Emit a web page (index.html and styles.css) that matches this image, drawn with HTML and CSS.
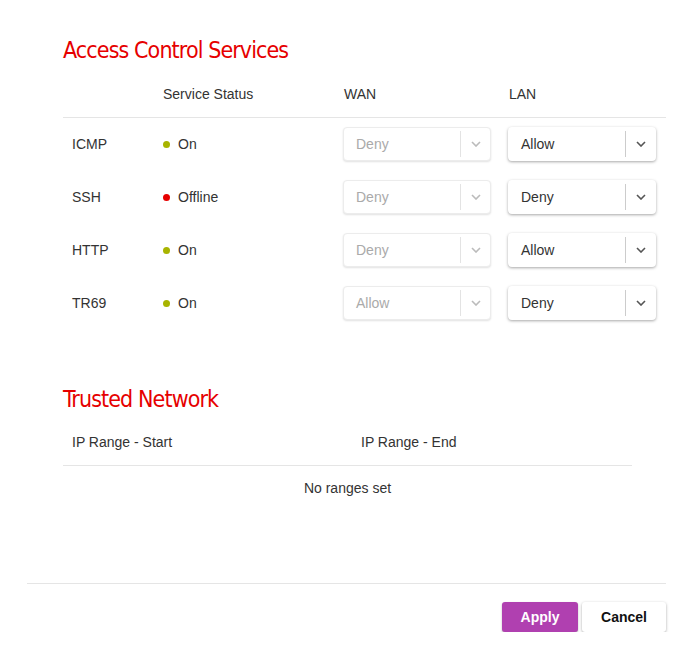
FILE: index.html
```html
<!DOCTYPE html>
<html>
<head>
<meta charset="utf-8">
<link rel="stylesheet" href="styles.css">
</head>
<body>
<div class="page">
  <div class="content">
    <h2 class="title">Access Control Services</h2>
    <div class="acs">
      <div class="acs-row acs-head">
        <div></div>
        <div class="c2">Service Status</div>
        <div class="c3">WAN</div>
        <div class="c4">LAN</div>
      </div>
      <div class="acs-row">
        <div class="c1">ICMP</div>
        <div class="c2"><span class="dot on"></span>On</div>
        <div class="c3"><div class="sel dis"><span class="val">Deny</span><span class="arr"><svg width="10" height="6" viewBox="0 0 10 6"><path d="M1 1l4 4 4-4" fill="none" stroke="currentColor" stroke-width="1.6"/></svg></span></div></div>
        <div class="c4"><div class="sel"><span class="val">Allow</span><span class="arr"><svg width="10" height="6" viewBox="0 0 10 6"><path d="M1 1l4 4 4-4" fill="none" stroke="currentColor" stroke-width="1.6"/></svg></span></div></div>
      </div>
      <div class="acs-row">
        <div class="c1">SSH</div>
        <div class="c2"><span class="dot off"></span>Offline</div>
        <div class="c3"><div class="sel dis"><span class="val">Deny</span><span class="arr"><svg width="10" height="6" viewBox="0 0 10 6"><path d="M1 1l4 4 4-4" fill="none" stroke="currentColor" stroke-width="1.6"/></svg></span></div></div>
        <div class="c4"><div class="sel"><span class="val">Deny</span><span class="arr"><svg width="10" height="6" viewBox="0 0 10 6"><path d="M1 1l4 4 4-4" fill="none" stroke="currentColor" stroke-width="1.6"/></svg></span></div></div>
      </div>
      <div class="acs-row">
        <div class="c1">HTTP</div>
        <div class="c2"><span class="dot on"></span>On</div>
        <div class="c3"><div class="sel dis"><span class="val">Deny</span><span class="arr"><svg width="10" height="6" viewBox="0 0 10 6"><path d="M1 1l4 4 4-4" fill="none" stroke="currentColor" stroke-width="1.6"/></svg></span></div></div>
        <div class="c4"><div class="sel"><span class="val">Allow</span><span class="arr"><svg width="10" height="6" viewBox="0 0 10 6"><path d="M1 1l4 4 4-4" fill="none" stroke="currentColor" stroke-width="1.6"/></svg></span></div></div>
      </div>
      <div class="acs-row">
        <div class="c1">TR69</div>
        <div class="c2"><span class="dot on"></span>On</div>
        <div class="c3"><div class="sel dis"><span class="val">Allow</span><span class="arr"><svg width="10" height="6" viewBox="0 0 10 6"><path d="M1 1l4 4 4-4" fill="none" stroke="currentColor" stroke-width="1.6"/></svg></span></div></div>
        <div class="c4"><div class="sel"><span class="val">Deny</span><span class="arr"><svg width="10" height="6" viewBox="0 0 10 6"><path d="M1 1l4 4 4-4" fill="none" stroke="currentColor" stroke-width="1.6"/></svg></span></div></div>
      </div>
    </div>

    <h2 class="title title2">Trusted Network</h2>
    <div class="tn">
      <div class="tn-head">
        <div class="t1">IP Range - Start</div>
        <div class="t2">IP Range - End</div>
      </div>
      <div class="tn-empty">No ranges set</div>
    </div>
  </div>
  <div class="footer">
    <button class="btn apply">Apply</button>
    <button class="btn cancel">Cancel</button>
  </div>
</div>
</body>
</html>
```
FILE: styles.css
```css
* { box-sizing: border-box; }
body {
  margin: 0;
  background: #fff;
  font-family: "Liberation Sans", Arial, sans-serif;
  font-size: 14px;
  color: #333;
}
.page {
  padding: 0 20px 0 27px;
}
.content {
  padding-left: 36px;
  padding-top: 36px;
}
.title {
  margin: 0;
  font-family: "DejaVu Sans Condensed", "Liberation Sans", sans-serif;
  font-weight: normal;
  font-size: 23px;
  line-height: 28px;
  color: #e60000;
  letter-spacing: -0.9px;
}
.acs {
  margin-top: 22px;
  width: 603px;
}
.acs-row {
  display: grid;
  grid-template-columns: 100px 180px 165px 158px;
  align-items: center;
  height: 53px;
  padding-bottom: 1px;
}
.acs-head {
  height: 32px;
  padding-bottom: 0;
  align-items: start;
  border-bottom: 1px solid #e5e5e5;
}
.acs-head .c3 { padding-left: 1px; }
.acs-head .c4 { padding-left: 1px; }
.c1 { padding-left: 9px; }
.c2 { display: flex; align-items: center; }
.dot {
  width: 7px; height: 7px; border-radius: 50%;
  margin: 1px 8px 0 0;
}
.dot.on { background: #a8b400; }
.dot.off { background: #e60000; }
.sel {
  width: 148px;
  height: 34px;
  border-radius: 4px;
  background: #fff;
  display: flex;
  align-items: center;
  box-shadow: 0 1px 3px rgba(0,0,0,0.35);
  color: #333;
}
.sel .val {
  flex: 1;
  padding-left: 13px;
}
.sel .arr {
  width: 31px;
  height: 26px;
  border-left: 1px solid #ccc;
  display: flex;
  align-items: center;
  justify-content: center;
  color: #555;
}
.sel.dis {
  box-shadow: 0 1px 2px rgba(0,0,0,0.12);
  border: 1px solid #ececec;
  color: #aaa;
}
.sel.dis .val { padding-left: 12px; }
.sel.dis .arr { color: #bbb; border-left-color: #e3e3e3; width: 30px; }
.title2 {
  margin-top: 55px;
}
.tn {
  width: 569px;
  margin-top: 21px;
}
.tn-head {
  display: flex;
  height: 32px;
  border-bottom: 1px solid #e5e5e5;
}
.t1 { width: 298px; padding-left: 9px; }
.tn-empty {
  text-align: center;
  padding-top: 14px;
}
.footer {
  margin-top: 87px;
  border-top: 1px solid #e5e5e5;
  display: flex;
  justify-content: flex-end;
  gap: 4px;
  padding-top: 18px;
}
.btn {
  height: 30px;
  border-radius: 3px;
  font-family: "Liberation Sans", Arial, sans-serif;
  font-weight: bold;
  font-size: 14px;
  border: none;
  cursor: pointer;
}
.apply {
  width: 76px;
  background: #b040b0;
  color: #fff;
  box-shadow: 0 1px 2px rgba(0,0,0,0.3);
}
.cancel {
  width: 84px;
  background: #fff;
  color: #111;
  box-shadow: 0 1px 3px rgba(0,0,0,0.35);
}
```
